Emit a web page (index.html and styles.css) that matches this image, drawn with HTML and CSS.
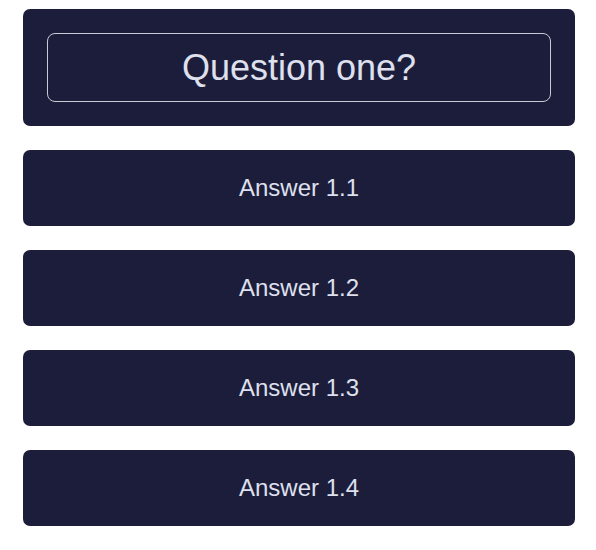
FILE: index.html
```html
<!DOCTYPE html>
<html>
<head>
<meta charset="utf-8">
<link rel="stylesheet" href="styles.css">
</head>
<body>
<div class="quiz">
  <div class="question-card">
    <div class="question">Question one?</div>
  </div>
  <div class="answer">Answer 1.1</div>
  <div class="answer">Answer 1.2</div>
  <div class="answer">Answer 1.3</div>
  <div class="answer">Answer 1.4</div>
</div>
</body>
</html>
```
FILE: styles.css
```css
html, body {
  margin: 0;
  padding: 0;
  background: #ffffff;
}
body {
  font-family: "Liberation Sans", Arial, sans-serif;
}
.quiz {
  display: flex;
  flex-direction: column;
  gap: 24px;
  width: 552px;
  padding: 9px 0 0 23px;
}
.question-card {
  background: #1c1d3a;
  border-radius: 7px;
  padding: 24px;
}
.question {
  height: 67px;
  border: 1px solid #c9cad6;
  border-radius: 8px;
  display: flex;
  align-items: center;
  justify-content: center;
  color: #dfe0ee;
  font-size: 36px;
}
.answer {
  height: 76px;
  background: #1c1d3a;
  border-radius: 7px;
  display: flex;
  align-items: center;
  justify-content: center;
  color: #dfe0ee;
  font-size: 24px;
}
```
